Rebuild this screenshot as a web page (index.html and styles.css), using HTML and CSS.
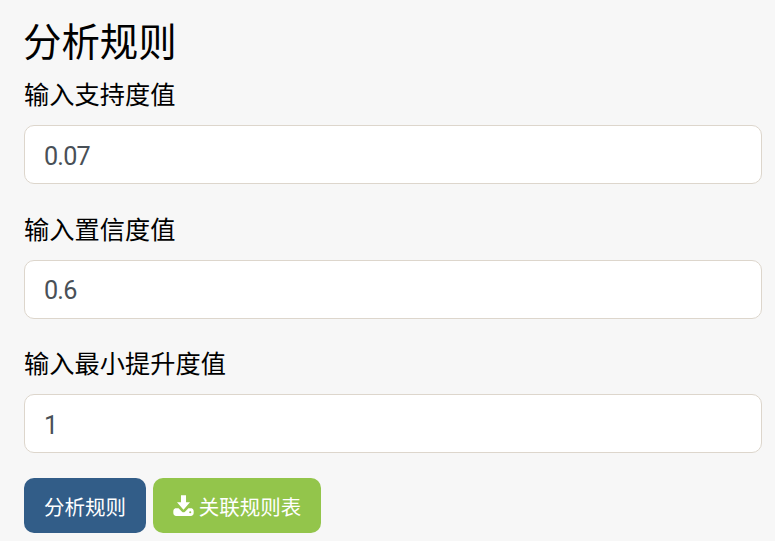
FILE: index.html
```html
<!DOCTYPE html>
<html lang="zh-CN">
<head>
    <meta charset="UTF-8" />
    <title>分析规则</title>
    <link rel="stylesheet" href="styles.css">
</head>
<body>
<h2 class="title">分析规则</h2>
<form class="rule-form">
    <div class="form-group">
        <label for="support">输入支持度值</label>
        <input type="text" id="support" class="form-control" value="0.07">
    </div>
    <div class="form-group">
        <label for="confidence">输入置信度值</label>
        <input type="text" id="confidence" class="form-control" value="0.6">
    </div>
    <div class="form-group">
        <label for="lift">输入最小提升度值</label>
        <input type="text" id="lift" class="form-control" value="1">
    </div>
    <div class="actions">
        <button type="button" class="btn btn-primary">分析规则</button>
        <a href="#" class="btn btn-success">
            <svg class="icon" viewBox="0 0 20 20" aria-hidden="true">
                <path d="M7.6 0.3h4.8v6.6h3.8L10 14 3.8 6.9h3.8z"/>
                <path fill-rule="evenodd" d="M0.3 15.4c0-1.6 1.1-2.7 2.7-2.7h2.3l3.3 3.2c.8.8 2 .8 2.8 0l3.3-3.2H17c1.6 0 2.7 1.1 2.7 2.7v1.8c0 1.6-1.1 2.7-2.7 2.7H3c-1.6 0-2.7-1.1-2.7-2.7zM16.4 15.4a1 1 0 1 0 0 2 1 1 0 0 0 0-2z"/>
            </svg>
            关联规则表
        </a>
    </div>
</form>
</body>
</html>
```

FILE: styles.css
```css
* {
    box-sizing: border-box;
}
body {
    margin: 0;
    padding: 0 13px 0 24px;
    background-color: #f7f7f7;
    font-family: Roboto, "Noto Sans CJK SC", sans-serif;
    color: #000;
}
.title {
    margin: 0 0 0 -1px;
    padding-top: 17px;
    font-size: 38.4px;
    line-height: 52px;
    font-weight: 400;
}
.form-group {
    margin-bottom: 19.5px;
}
.form-group label {
    display: block;
    height: 56px;
    font-size: 25.2px;
    line-height: 53px;
    letter-spacing: 0.05px;
}
.form-control {
    display: block;
    width: 100%;
    height: 59px;
    padding: 3px 19px 0;
    font-family: inherit;
    font-size: 25.2px;
    letter-spacing: -0.8px;
    color: #495057;
    background-color: #fff;
    border: 1px solid #ddd6cc;
    border-radius: 10px;
}
.actions {
    display: flex;
    gap: 7px;
    margin-top: 25px;
}
.form-group:last-of-type {
    margin-bottom: 0;
}
.btn {
    display: flex;
    align-items: center;
    justify-content: center;
    height: 55px;
    font-family: inherit;
    font-size: 20.5px;
    color: #fff;
    text-decoration: none;
    border: 0;
    border-radius: 10px;
}
.btn-primary {
    width: 122px;
    background-color: #325d88;
}
.btn-success {
    width: 168px;
    background-color: #93c54b;
}
.icon {
    width: 21px;
    height: 21px;
    margin-right: 5px;
    fill: #fff;
}
```
